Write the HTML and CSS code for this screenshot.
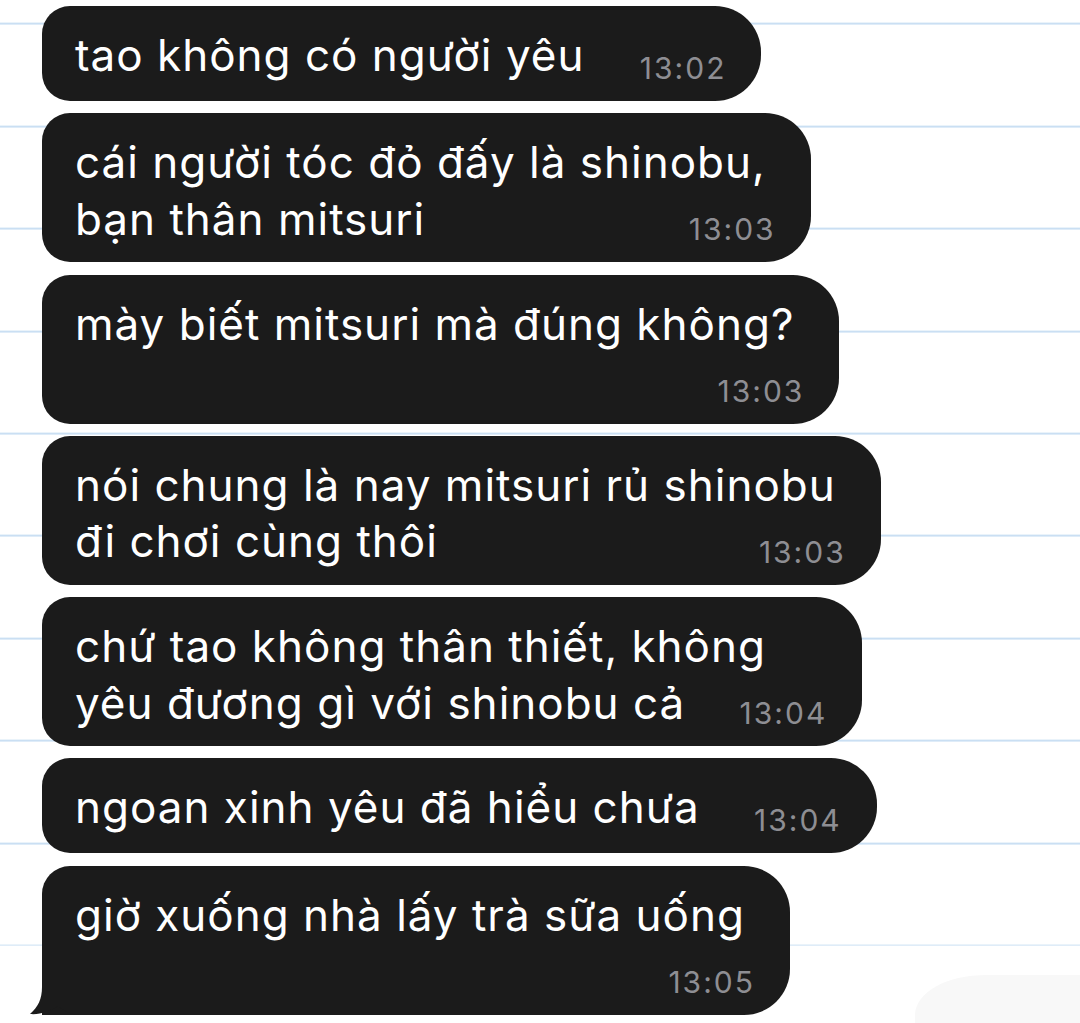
FILE: index.html
```html
<!DOCTYPE html>
<html lang="vi">
<head>
	<meta charset="UTF-8"/>
	<title>chat</title>
	<link rel="stylesheet" href="styles.css">
</head>
<body>
<div class="chat">
	<div class="msg"><span class="msg_text">tao không có người yêu</span><span class="msg_pad"></span><span class="msg_time">13:02</span></div>
	<div class="msg"><span class="msg_text">cái người tóc đỏ đấy là shinobu,<br>bạn thân mitsuri</span><span class="msg_pad"></span><span class="msg_time">13:03</span></div>
	<div class="msg"><span class="msg_text">mày biết mitsuri mà đúng không?</span><br><span class="msg_pad"></span><span class="msg_time">13:03</span></div>
	<div class="msg"><span class="msg_text">nói chung là nay mitsuri rủ shinobu<br>đi chơi cùng thôi</span><span class="msg_pad"></span><span class="msg_time">13:03</span></div>
	<div class="msg"><span class="msg_text">chứ tao không thân thiết, không<br>yêu đương gì với shinobu cả</span><span class="msg_pad"></span><span class="msg_time">13:04</span></div>
	<div class="msg"><span class="msg_text">ngoan xinh yêu đã hiểu chưa</span><span class="msg_pad"></span><span class="msg_time">13:04</span></div>
	<div class="msg msg_last"><span class="msg_text">giờ xuống nhà lấy trà sữa uống</span><br><span class="msg_pad"></span><span class="msg_time">13:05</span>
		<svg class="msg_tail" width="50" height="42" viewBox="0 0 50 42"><path d="M12 0 L12 14 C12 26 8 34 0 41 C10 42 20 38 28 33 C34 38 42 42 50 42 L50 0 Z" fill="#1b1b1b"/></svg>
	</div>
</div>
<div class="smudge"></div>
</body>
</html>
```

FILE: styles.css
```css
*{margin:0;padding:0;}
html,body{height:100%;overflow:hidden;}
body{position:relative;background:#fff repeating-linear-gradient(to bottom,transparent 0,transparent 100.4px,#cadff3 100.4px,#cadff3 102.4px) 0 -77.4px;font-family:Inter,"Noto Sans",sans-serif;}
.chat{display:flex;flex-direction:column;align-items:flex-start;gap:12.3px;padding:6px 0 0 42px;}
.msg{position:relative;width:fit-content;min-height:59px;padding:21px 45px 15px 33px;background:#1b1b1b;color:#fff;border-radius:28px 46px 46px 28px;font-size:44px;line-height:56.5px;letter-spacing:1px;white-space:nowrap;}
.msg_pad{display:inline-block;width:132px;height:1px;}
.msg_time{position:absolute;right:35px;bottom:18px;font-size:30px;line-height:1;letter-spacing:2px;color:#8e8e93;}
.msg_last{border-bottom-left-radius:0;}
.msg_tail{position:absolute;left:-12px;bottom:0;}
.smudge{position:absolute;right:0;bottom:0;width:165px;height:48px;border-radius:70px 0 0 0/40px 0 0 0;background:#f8f8f8;}
```
